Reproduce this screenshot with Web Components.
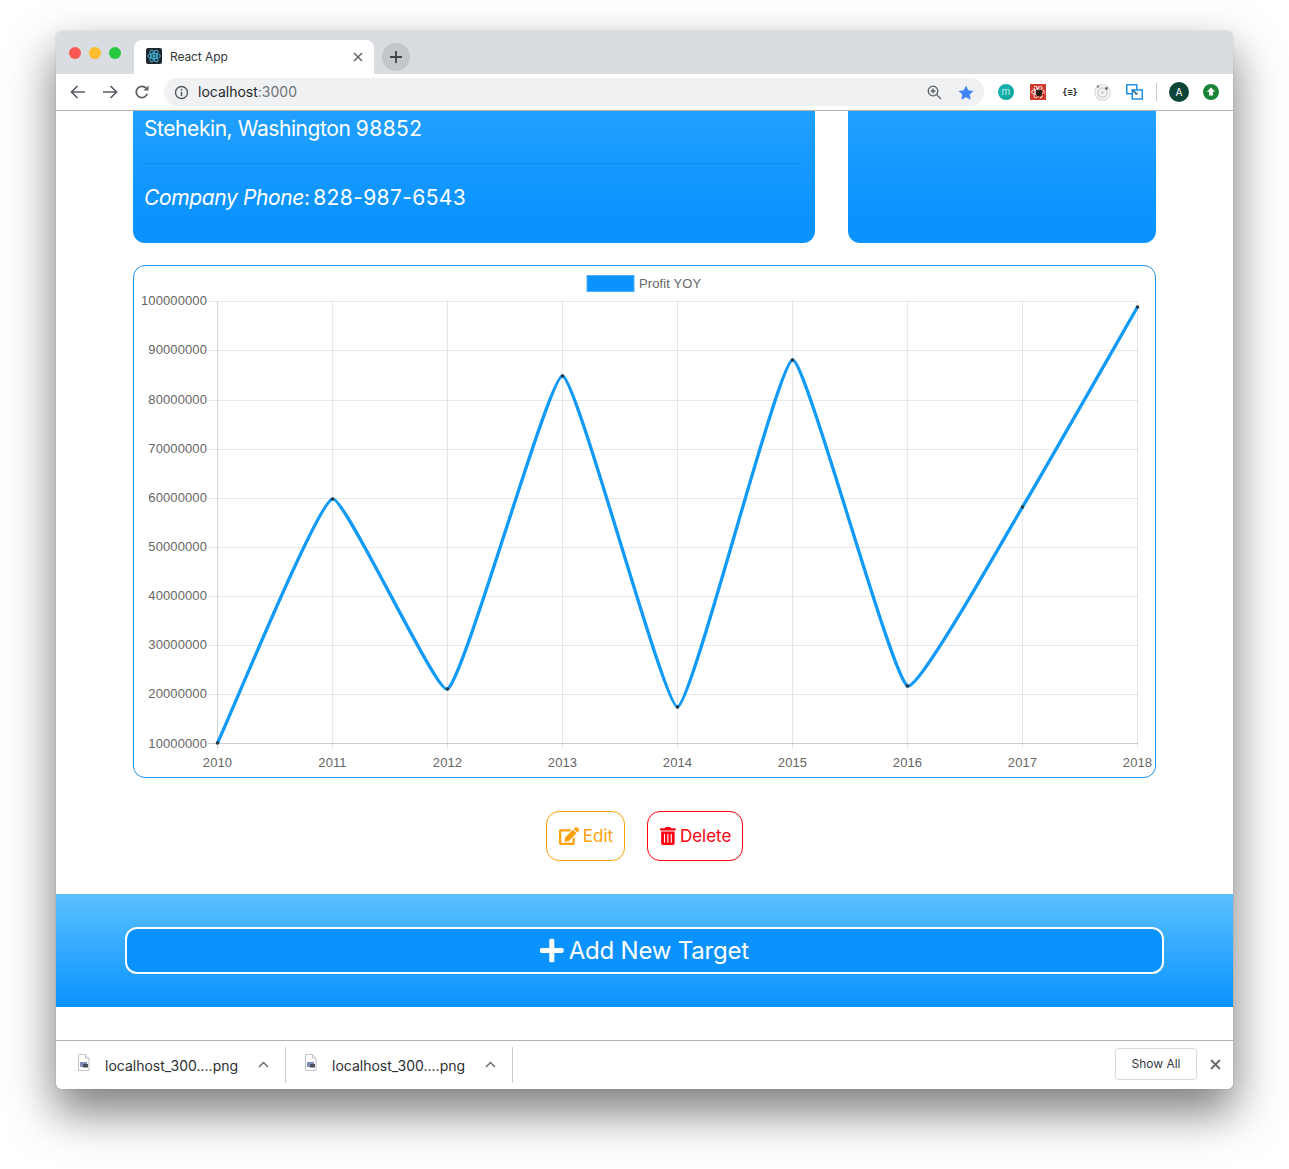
<!DOCTYPE html>
<html>
<head>
<meta charset="utf-8">
<title>React App</title>
<style>
  html, body { margin: 0; padding: 0; background: #fff; overflow: hidden; }
  body { height: 1169px; box-sizing: border-box; padding: 31px 56px 0; font-family: Inter, "Liberation Sans", sans-serif; }
</style>
</head>
<body>
<browser-window>
  <info-cards>
    <div><span style="letter-spacing:-.43px">Stehekin, Washington </span><span style="letter-spacing:.4px">98852</span></div>
    <hr slot="rule">
    <div slot="phone"><em style="letter-spacing:-.37px">Company Phone</em><span style="letter-spacing:-1.400px">: </span><span style="letter-spacing:.38px">828-987-6543</span></div>
  </info-cards>
  <line-chart></line-chart>
  <div class="actions" style="display:flex;justify-content:center;gap:22px;margin-top:33px;">
    <action-button color="#ff9f0a" icon="edit">Edit</action-button>
    <action-button color="#ff0010" icon="trash">Delete</action-button>
  </div>
  <add-target>Add New Target</add-target>
</browser-window>

<script>
(function(w, doc) {
  'use strict';

  const ICONS = {
    edit: ['0 0 576 512', 'M402.6 83.2l90.2 90.2c3.8 3.8 3.8 10 0 13.8L274.4 405.6l-92.8 10.3c-12.4 1.4-22.9-9.1-21.5-21.5l10.3-92.8L388.8 83.2c3.8-3.8 10-3.8 13.8 0zm162-22.9l-48.8-48.8c-15.2-15.2-39.9-15.2-55.2 0l-35.4 35.4c-3.8 3.8-3.8 10 0 13.8l90.2 90.2c3.8 3.8 10 3.8 13.8 0l35.4-35.4c15.2-15.3 15.2-40 0-55.2zM384 346.2V448H64V128h229.8c3.2 0 6.2-1.3 8.5-3.5l40-40c7.6-7.6 2.2-20.5-8.5-20.5H48C21.5 64 0 85.5 0 112v352c0 26.5 21.5 48 48 48h352c26.5 0 48-21.5 48-48V306.2c0-10.7-12.9-16-20.5-8.5l-40 40c-2.2 2.3-3.5 5.3-3.5 8.5z'],
    trash: ['0 0 448 512', 'M32 464a48 48 0 0 0 48 48h288a48 48 0 0 0 48-48V128H32zm272-256a16 16 0 0 1 32 0v224a16 16 0 0 1-32 0zm-96 0a16 16 0 0 1 32 0v224a16 16 0 0 1-32 0zm-96 0a16 16 0 0 1 32 0v224a16 16 0 0 1-32 0zM432 32H312l-9.4-18.7A24 24 0 0 0 281.1 0H166.8a23.72 23.72 0 0 0-21.4 13.3L136 32H16A16 16 0 0 0 0 48v32a16 16 0 0 0 16 16h416a16 16 0 0 0 16-16V48a16 16 0 0 0-16-16z'],
    plus: ['0 0 448 512', 'M416 208H272V64c0-17.67-14.33-32-32-32h-32c-17.67 0-32 14.33-32 32v144H32c-17.67 0-32 14.33-32 32v32c0 17.67 14.33 32 32 32h144v144c0 17.67 14.33 32 32 32h32c17.67 0 32-14.33 32-32V304h144c17.67 0 32-14.33 32-32v-32c0-17.67-14.33-32-32-32z']
  };

  function faIcon(name, size) {
    const i = ICONS[name];
    return `<svg viewBox="${i[0]}" height="${size}" fill="currentColor"><path d="${i[1]}"/></svg>`;
  }

  const atom = (color, sw) => `
    <g fill="none" stroke="${color}" stroke-width="${sw}">
      <ellipse cx="8" cy="8" rx="6.4" ry="2.5"/>
      <ellipse cx="8" cy="8" rx="6.4" ry="2.5" transform="rotate(60 8 8)"/>
      <ellipse cx="8" cy="8" rx="6.4" ry="2.5" transform="rotate(120 8 8)"/>
    </g>`;

  const fileIcon = `
    <svg width="13" height="17" viewBox="0 0 13 17">
      <path d="M1.5 .5h7l3.5 3.5v12.5h-10.500z" fill="#fff" stroke="#c4c4c8"/>
      <path d="M8.500 .5v3.500h3.500" fill="#eee" stroke="#c4c4c8"/>
      <rect x="3" y="8" width="7" height="5" fill="#7f8fb8"/>
      <rect x="6" y="10" width="5" height="3.500" fill="#4a4f5c"/>
    </svg>`;

  const chromeTpl = doc.createElement('template');
  chromeTpl.innerHTML = `
    <style>
      :host {
        display: flex;
        flex-direction: column;
        height: 1058px;
        background: #fff;
        border-radius: 6px;
        box-shadow: 0 0 1px rgba(0,0,0,.45), 0 22px 46px 2px rgba(0,0,0,.5);
        overflow: hidden;
        color: #3c4043;
        font-family: Inter, "Liberation Sans", sans-serif;
      }
      .tabstrip {
        display: flex;
        align-items: flex-end;
        height: 43px;
        background: #d9dce0;
        flex: none;
      }
      .lights { display: flex; gap: 8px; padding: 0 13px; align-self: flex-start; margin-top: 16px; }
      .lights i { width: 12px; height: 12px; border-radius: 50%; display: block; }
      .tab {
        position: relative;
        display: flex;
        align-items: center;
        width: 240px;
        height: 34px;
        box-sizing: border-box;
        padding: 0 11px 0 12px;
        background: #fff;
        border-radius: 8px 8px 0 0;
        font-size: 12px;
        letter-spacing: -.1px;
        color: #33373b;
      }
      .tab svg.fav { margin-right: 8px; flex: none; }
      .tab span { flex: 1; margin-top: -2px; }
      .newtab {
        width: 28px;
        height: 28px;
        border-radius: 50%;
        background: #c3c6cb;
        margin: 0 0 3px 8px;
        display: flex;
        align-items: center;
        justify-content: center;
      }
      .toolbar {
        display: flex;
        align-items: center;
        height: 36px;
        padding: 0 6px;
        flex: none;
        border-bottom: 1px solid #b1b1b1;
        background: #fff;
      }
      .btn { width: 32px; height: 28px; display: flex; align-items: center; justify-content: center; flex: none; }
      .omni {
        flex: 1;
        display: flex;
        align-items: center;
        height: 28px;
        margin: 0 6px;
        background: #f0f1f3;
        border-radius: 14px;
        padding: 0 2px 0 10px;
        font-size: 14px;
        color: #24282c;
      }
      .omni .url { flex: 1; margin-left: 9px; margin-top: -2px; }
      .omni .url span { color: #6f7478; }
      .sep { width: 1px; height: 18px; background: #c8cacd; margin: 0 6px; flex: none; }
      .av {
        width: 20px; height: 20px; border-radius: 50%;
        background: #0b4537; color: #fff; font-size: 10px;
        display: flex; align-items: center; justify-content: center;
      }
      .mono { font: bold 8.500px "DejaVu Sans Mono", monospace; color: #222; white-space: nowrap; }
      .page { flex: 1; min-height: 0; overflow: hidden; display: flex; flex-direction: column; }
      .downloads {
        flex: none;
        display: flex;
        align-items: center;
        height: 48px;
        border-top: 1px solid #b1b1b1;
        background: #fff;
        font-size: 14px;
        color: #2c3034;
      }
      .item {
        display: flex;
        align-items: center;
        width: 230px;
        height: 36px;
        box-sizing: border-box;
        padding-left: 21px;
        border-right: 1px solid #c9c9cc;
      }
      .item .ic { width: 28px; margin-top: -3px; margin-bottom: 3px; flex: none; display: flex; height: 17px; }
      .item .nm { width: 133px; white-space: nowrap; padding-top: 1px; }
      .item .up { margin-left: 20px; display: flex; margin-top: -2px; }
      .item + .item { width: 227px; padding-left: 18px; }
      .spring { flex: 1; }
      .showall {
        display: flex; align-items: center; justify-content: center;
        width: 82px; height: 32px; box-sizing: border-box;
        border: 1px solid #d6d6db; border-radius: 4px; padding-bottom: 2px;
        font-size: 12px; color: #33373b; margin-top: -2px;
      }
      .dlx { width: 36px; display: flex; justify-content: center; margin-top: -2px; }
    </style>
    <div class="tabstrip">
      <div class="lights"><i style="background:#fc5753"></i><i style="background:#fdbc2e"></i><i style="background:#27c83f"></i></div>
      <div class="tab">
        <svg class="fav" width="16" height="16" viewBox="0 0 16 16" style="margin-top:-2px">
          <rect width="16" height="16" rx="2" fill="#20252b"/>
          ${atom('#3fb4d6', 1)}
          <circle cx="8" cy="8" r="1.500" fill="#3fb4d6"/>
        </svg>
        <span>React App</span>
        <svg width="10" height="10" viewBox="0 0 10 10"><path d="M1 1l8 8M9 1l-8 8" stroke="#5f6368" stroke-width="1.500"/></svg>
      </div>
      <div class="newtab">
        <svg width="12" height="12" viewBox="0 0 12 12"><path d="M6 0v12M0 6h12" stroke="#404448" stroke-width="1.800"/></svg>
      </div>
    </div>
    <div class="toolbar">
      <div class="btn"><svg width="16" height="14" viewBox="0 0 16 14"><path d="M15 7H2M7.500 1L1.500 7l6 6" fill="none" stroke="#5a5e63" stroke-width="1.700"/></svg></div>
      <div class="btn"><svg width="16" height="14" viewBox="0 0 16 14"><path d="M1 7h13M8.500 1l6 6-6 6" fill="none" stroke="#5a5e63" stroke-width="1.700"/></svg></div>
      <div class="btn"><svg width="16" height="16" viewBox="0 0 16 16"><path d="M13.200 9.800A5.600 5.600 0 1 1 12 4.200" fill="none" stroke="#5a5e63" stroke-width="1.700"/><path d="M14.500 1.500v5h-5z" fill="#5a5e63"/></svg></div>
      <div class="omni">
        <svg width="15" height="15" viewBox="0 0 15 15"><circle cx="7.500" cy="7.500" r="6" fill="none" stroke="#55595e" stroke-width="1.400"/><path d="M7.500 6.700v4.300" stroke="#55595e" stroke-width="1.500"/><circle cx="7.500" cy="4.600" r=".95" fill="#55595e"/></svg>
        <div class="url">localhost<span>:3000</span></div>
        <div class="btn"><svg width="15" height="15" viewBox="0 0 15 15"><circle cx="6" cy="6" r="4.800" fill="none" stroke="#5a5e63" stroke-width="1.300"/><path d="M6 3.600v4.800M3.600 6h4.800M9.600 9.600l4.400 4.400" fill="none" stroke="#5a5e63" stroke-width="1.300"/></svg></div>
        <div class="btn"><svg width="16" height="15" viewBox="0 0 16 15"><path d="M8 .5l2.300 4.800 5.200.7-3.800 3.600.9 5.200L8 12.300 3.400 14.800l.9-5.200L.5 6l5.200-.7z" fill="#4285f4"/></svg></div>
      </div>
      <div class="btn"><svg width="16" height="16" viewBox="0 0 16 16"><defs><linearGradient id="mg" x1="0" y1="0" x2="1" y2="1"><stop offset="0" stop-color="#1fb5b8"/><stop offset="1" stop-color="#07a596"/></linearGradient></defs><circle cx="8" cy="8" r="8" fill="url(#mg)"/><text x="8" y="11" text-anchor="middle" font-family="Inter, sans-serif" font-size="10" fill="#bff0ea">m</text></svg></div>
      <div class="btn"><svg width="16" height="16" viewBox="0 0 16 16"><rect width="16" height="16" fill="#cf3b2e"/><g stroke-dasharray="1.500 .7">${atom('#fff', 1.100)}</g><ellipse cx="9" cy="9" rx="3" ry="3.600" fill="#2a1a18"/><path d="M6 6l2 2M12 6l-2 2M5.500 10h2M12.500 11l-2-1" stroke="#2a1a18"/></svg></div>
      <div class="btn"><span class="mono">{≡}</span></div>
      <div class="btn"><svg width="17" height="17" viewBox="0 0 17 17"><circle cx="8.500" cy="8.500" r="7.800" fill="#f6f6f6" stroke="#cfcfcf"/><circle cx="8.500" cy="8.500" r="4.600" fill="none" stroke="#c9c9c9" stroke-width="1.200"/><circle cx="8.500" cy="8.500" r="1.800" fill="#d4d4d4"/><circle cx="4" cy="2.500" r="1.300" fill="#8a8a8a"/><circle cx="12.500" cy="4.500" r="1.400" fill="#6e6e6e"/></svg></div>
      <div class="btn"><svg width="17" height="16" viewBox="0 0 17 16"><rect x=".75" y=".75" width="10" height="9" fill="#fff" stroke="#1e8fe8" stroke-width="1.500"/><rect x="6.250" y="6" width="10" height="9" fill="#fff" stroke="#1e8fe8" stroke-width="1.500"/><path d="M6.500 6l4 4" stroke="#1b5e96" stroke-width="1.600"/><path d="M9 10.500h2.500V8z" fill="#1b5e96"/></svg></div>
      <div class="sep"></div>
      <div class="btn"><div class="av">A</div></div>
      <div class="btn"><svg width="16" height="16" viewBox="0 0 16 16"><circle cx="8" cy="8" r="8" fill="#1a8436"/><path d="M8 3.500l4.200 4.300H10v3.700H6V7.800H3.800z" fill="#fff"/></svg></div>
    </div>
    <div class="page"><slot></slot></div>
    <div class="downloads">
      <div class="item">
        <div class="ic">${fileIcon}</div><div class="nm">localhost_300....png</div>
        <div class="up"><svg width="11" height="7" viewBox="0 0 11 7"><path d="M1 6l4.500-4.500L10 6" fill="none" stroke="#6b6f73" stroke-width="1.500"/></svg></div>
      </div>
      <div class="item">
        <div class="ic">${fileIcon}</div><div class="nm">localhost_300....png</div>
        <div class="up"><svg width="11" height="7" viewBox="0 0 11 7"><path d="M1 6l4.500-4.500L10 6" fill="none" stroke="#6b6f73" stroke-width="1.500"/></svg></div>
      </div>
      <div class="spring"></div>
      <div class="showall">Show All</div>
      <div class="dlx"><svg width="11" height="11" viewBox="0 0 11 11"><path d="M1 1l9 9M10 1l-9 9" stroke="#66696d" stroke-width="1.800"/></svg></div>
    </div>
  `;

  class BrowserWindow extends HTMLElement {
    constructor() {
      super();
      this.attachShadow({ mode: 'open' });
      this.shadowRoot.appendChild(chromeTpl.content.cloneNode(true));
    }
  }

  const cardsTpl = doc.createElement('template');
  cardsTpl.innerHTML = `
    <style>
      :host {
        display: grid;
        grid-template-columns: 682px 308px;
        column-gap: 33px;
        margin: 0 77px 22px;
        color: #fff;
        font-size: 21px;
        line-height: 33px;
      }
      .card {
        height: 132px;
        box-sizing: border-box;
        background: linear-gradient(#22a0ff, #0a93ff 80%);
        border-radius: 0 0 12px 12px;
        padding: 1px 11px 0;
      }
      ::slotted(hr) {
        border: 0;
        border-top: 1px solid rgba(0,0,0,.07);
        margin: 18px 0 17px;
      }
    </style>
    <div class="card"><slot></slot><slot name="rule"></slot><slot name="phone"></slot></div>
    <div class="card"></div>
  `;

  class InfoCards extends HTMLElement {
    constructor() {
      super();
      this.attachShadow({ mode: 'open' });
      this.shadowRoot.appendChild(cardsTpl.content.cloneNode(true));
    }
  }

  // same curve chart.js draws, the tension is low on this chart
  function splinePath(pts, t) {
    let d = 'M' + pts[0][0] + ' ' + pts[0][1];
    const ctl = pts.map((p, i) => {
      const a = pts[i - 1] || p, b = pts[i + 1] || p;
      const d01 = Math.hypot(p[0] - a[0], p[1] - a[1]);
      const d12 = Math.hypot(b[0] - p[0], b[1] - p[1]);
      const sum = (d01 + d12) || 1;
      const fa = t * d01 / sum, fb = t * d12 / sum;
      return [
        [p[0] - fa * (b[0] - a[0]), p[1] - fa * (b[1] - a[1])],
        [p[0] + fb * (b[0] - a[0]), p[1] + fb * (b[1] - a[1])]
      ];
    });
    for (let i = 1; i < pts.length; i++) {
      const c1 = ctl[i - 1][1], c2 = ctl[i][0];
      d += ` C${c1[0].toFixed(1)} ${c1[1].toFixed(1)} ${c2[0].toFixed(1)} ${c2[1].toFixed(1)} ${pts[i][0]} ${pts[i][1]}`;
    }
    return d;
  }

  class LineChart extends HTMLElement {
    constructor() {
      super();
      this.attachShadow({ mode: 'open' });
      const years = [2010, 2011, 2012, 2013, 2014, 2015, 2016, 2017, 2018];
      const ys = [743, 499, 689, 376, 707, 360, 686, 507, 307];
      const rows = [301, 350, 400, 449, 498, 547, 596, 645, 694, 743];
      const xAt = i => 217.5 + i * 115;
      const pts = ys.map((y, i) => [xAt(i), y]);
      let grid = '', labels = '';
      years.forEach((yr, i) => {
        grid += `<path d="M${xAt(i)} 301V749" stroke="${i ? 'rgba(0,0,0,.09)' : 'rgba(0,0,0,.16)'}"/>`;
        labels += `<text x="${xAt(i)}" y="767" text-anchor="middle">${yr}</text>`;
      });
      rows.forEach((r, i) => {
        grid += `<path d="M208 ${r + .5}H1138" stroke="${i == 9 ? 'rgba(0,0,0,.2)' : 'rgba(0,0,0,.09)'}"/>`;
        labels += `<text x="207" y="${r + (i == 9 ? 5 : 4)}" text-anchor="end">${100000000 - i * 10000000}</text>`;
      });
      const dots = pts.map(p => `<circle cx="${p[0]}" cy="${p[1]}" r="1.800" fill="#2b3a44"/>`).join('');
      this.shadowRoot.innerHTML = `
        <style>
          :host {
            display: block;
            height: 513px;
            margin: 0 77px;
            box-sizing: border-box;
            border: 1px solid #1e90e8;
            border-radius: 12px;
            overflow: hidden;
          }
          svg { display: block; }
          text { font: 13px "Liberation Sans", Arial, sans-serif; letter-spacing: .1px; fill: #666; }
        </style>
        <svg width="1021" height="511" viewBox="134 266 1021 511">
          <rect x="587" y="275.500" width="47" height="16" fill="#0a93ff" stroke="#4db0ff"/>
          <text x="639" y="288">Profit YOY</text>
          ${grid}
          ${labels}
          <path d="${splinePath(pts, .12)}" fill="none" stroke="#119af8" stroke-width="3.300"/>
          ${dots}
        </svg>
      `;
    }
  }

  class ActionButton extends HTMLElement {
    constructor() {
      super();
      this.attachShadow({ mode: 'open' });
      const c = this.getAttribute('color');
      this.shadowRoot.innerHTML = `
        <style>
          :host {
            display: flex;
            align-items: center;
            gap: 4px;
            height: 50px;
            box-sizing: border-box;
            padding: 0 11px 1px 12px;
            border: 1px solid ${c};
            border-radius: 13px;
            color: ${c};
            font-size: 17px;
          }
          svg { display: block; }
        </style>
        ${faIcon(this.getAttribute('icon'), 18)}<slot></slot>
      `;
    }
  }

  class AddTarget extends HTMLElement {
    constructor() {
      super();
      this.attachShadow({ mode: 'open' });
      this.shadowRoot.innerHTML = `
        <style>
          :host {
            display: block;
            margin-top: 33px;
            padding: 33px 69px;
            background: linear-gradient(#5ac0ff, #0a93ff);
          }
          .btn {
            display: flex;
            align-items: center;
            justify-content: center;
            gap: 5px;
            height: 47px;
            box-sizing: border-box;
            padding-bottom: 1px;
            border: 2px solid #fff;
            border-radius: 12px;
            background: #0a93ff;
            color: #fff;
            font-size: 24px;
            letter-spacing: -.2px;
          }
        </style>
        <div class="btn">${faIcon('plus', 27)}<slot></slot></div>
      `;
    }
  }

  customElements.define('browser-window', BrowserWindow);
  customElements.define('info-cards', InfoCards);
  customElements.define('line-chart', LineChart);
  customElements.define('action-button', ActionButton);
  customElements.define('add-target', AddTarget);

})(window, document);
</script>
</body>
</html>
